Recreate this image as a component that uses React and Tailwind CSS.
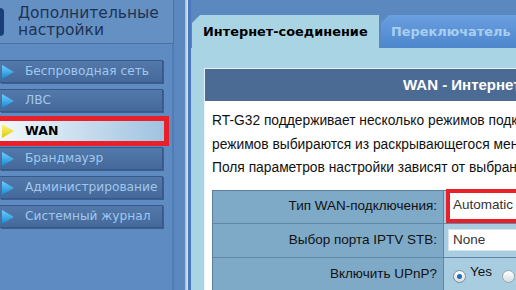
import React from "react";

const items = [
  { t: "Беспроводная сеть" },
  { t: "ЛВС" },
  { t: "WAN", active: true },
  { t: "Брандмауэр" },
  { t: "Администрирование" },
  { t: "Системный журнал" },
];

function Tri({ active }) {
  return (
    <svg width="12" height="14" viewBox="0 0 12 14" className="shrink-0">
      <defs>
        <linearGradient id={active ? "ty" : "tb"} x1="0" y1="0" x2="0" y2="1">
          <stop offset="0" stopColor={active ? "#fff68a" : "#6fd0ff"} />
          <stop offset="1" stopColor={active ? "#e0c800" : "#1886d0"} />
        </linearGradient>
      </defs>
      <path d="M0 0 L12 7 L0 14 Z" fill={`url(#${active ? "ty" : "tb"})`} />
    </svg>
  );
}

export default function App() {
  return (
    <div
      className="w-[516px] h-[290px] overflow-hidden bg-[#5b88bf] flex"
      style={{ fontFamily: '"DejaVu Sans", sans-serif' }}
    >
      {/* Sidebar */}
      <div className="w-[185px] shrink-0 flex flex-col">
        <div className="w-[174px] h-[44px] flex items-center bg-[#6590c4] border-b border-r border-[#4a72a6] relative">
          <div className="absolute left-0 top-[8px] w-[4px] h-[28px] bg-[#1a3f78] rounded-r-sm" />
          <div className="pl-[18px] text-[15.5px] leading-[17px] text-[#1d3354]">
            Дополнительные
            <br />
            настройки
          </div>
        </div>
        <div className="flex-1 w-[174px] border-r-2 border-[#4f7cb4] pt-[16px] flex flex-col gap-[6px] bg-[#5e8bc2]">
          {items.map((it) =>
            it.active ? (
              <div key={it.t} className="-mt-[2px] -mb-[5px] w-[169px] h-[30px] border-[5px] border-l-0 border-[#e8202a]">
                <div className="h-[20px] flex items-center gap-[11px] pl-[2px] bg-gradient-to-r from-[#f2f8fc] to-[#9fc3e0]">
                  <Tri active />
                  <span className="text-[12.5px] font-bold text-black">{it.t}</span>
                </div>
              </div>
            ) : (
              <div
                key={it.t}
                className="w-[163px] h-[23px] shrink-0 flex items-center gap-[11px] pl-[2px] bg-gradient-to-b from-[#5378aa] to-[#44699a] border border-l-0 border-[#36588a] shadow-[1px_1px_0_#3b5f8f]"
              >
                <Tri />
                <span className="text-[12.2px] text-[#a0c8ee]">{it.t}</span>
              </div>
            )
          )}
        </div>
      </div>
      {/* Divider */}
      <div className="w-[3px] shrink-0 bg-gradient-to-r from-[#aab8c8] to-[#e2e8ee]" />
      <div className="w-[3px] shrink-0 bg-[#4a78c0]" />
      {/* Main */}
      <div className="flex-1 flex flex-col min-w-0">
        <div className="h-[15px] shrink-0" />
        <div className="h-[33px] flex items-end shrink-0 gap-[2px] pl-[1px]">
          <div
            className="h-[33px] w-[187px] shrink-0 bg-[#a9d4e3] flex items-center pl-[11px] text-[12.9px] font-bold text-black whitespace-nowrap"
            style={{ clipPath: "polygon(8px 0, 100% 0, 100% 100%, 0 100%, 0 8px)" }}
          >
            Интернет-соединение
          </div>
          <div
            className="h-[33px] w-[200px] shrink-0 bg-gradient-to-b from-[#6a9fe0] to-[#4d86cc] flex items-center pl-[10px] text-[12.9px] font-bold text-[#a9cff0] whitespace-nowrap"
            style={{ clipPath: "polygon(8px 0, 100% 0, 100% 100%, 0 100%, 0 8px)" }}
          >
            Переключатель
          </div>
        </div>
        <div className="flex-1 bg-[#a9d4e3] pl-[13px] pt-[20px]">
          <div className="bg-white h-full border-l border-t border-[#e8f2f6] w-[400px]">
            <div
              className="h-[32px] bg-[#4b6b95] flex items-center pl-[198px] text-[15px] font-bold text-white whitespace-nowrap"
              style={{ fontFamily: '"Liberation Sans", Arial, sans-serif' }}
            >
              WAN - Интернет-соединение
            </div>
            <div
              className="pl-[7px] pt-[8px] text-[13.8px] leading-[23.5px] text-[#111] whitespace-nowrap"
              style={{ fontFamily: '"Liberation Sans", Arial, sans-serif' }}
            >
              <div>RT-G32 поддерживает несколько режимов подключения к Интернету.</div>
              <div>режимов выбираются из раскрывающегося меню.</div>
              <div>Поля параметров настройки зависят от выбранного режима.</div>
            </div>
            <div
              className="ml-[7px] mt-[10px] border-t border-l border-[#5a7e9c] text-[13.5px] text-[#111]"
              style={{ fontFamily: '"Liberation Sans", Arial, sans-serif' }}
            >
              <div className="flex h-[33px] border-b border-[#5e87a8]">
                <div className="w-[231px] bg-[#7eaac8] flex items-center justify-end pr-[6px] border-r border-[#5e87a8]">
                  Тип WAN-подключения:
                </div>
                <div className="flex-1 bg-[#a9cde0] flex items-center pl-[2px]">
                  <div className="border-[4px] border-[#e8202a] w-full h-[34px] -mt-[2px] bg-white flex items-center pl-[3px] text-[#333]">
                    Automatic IP
                  </div>
                </div>
              </div>
              <div className="flex h-[34px] border-b border-[#5e87a8]">
                <div className="w-[231px] bg-[#7eaac8] flex items-center justify-end pr-[6px] border-r border-[#5e87a8]">
                  Выбор порта IPTV STB:
                </div>
                <div className="flex-1 bg-[#a9cde0] flex items-center pl-[4px]">
                  <div className="w-full h-[22px] bg-white border border-[#d8e4ec] flex items-center pl-[4px] text-[#333]">
                    None
                  </div>
                </div>
              </div>
              <div className="flex h-[34px]">
                <div className="w-[231px] bg-[#7eaac8] flex items-center justify-end pr-[6px] border-r border-[#5e87a8]">
                  Включить UPnP?
                </div>
                <div className="flex-1 bg-[#a9cde0] flex items-center pl-[9px] gap-[4px]">
                  <span className="w-[13px] h-[13px] rounded-full border border-[#7d8d9a] bg-gradient-to-b from-white to-[#d8dde2] flex items-center justify-center mt-[3px]">
                    <span className="w-[5px] h-[5px] rounded-full bg-[#1e6fb0]" />
                  </span>
                  <span className="-mt-[4px]">Yes</span>
                  <span className="ml-[6px] w-[13px] h-[13px] rounded-full border border-[#9aa4ac] bg-gradient-to-b from-white to-[#d8dde2] mt-[3px]" />
                  <span className="-mt-[4px]">No</span>
                </div>
              </div>
            </div>
          </div>
        </div>
      </div>
    </div>
  );
}
